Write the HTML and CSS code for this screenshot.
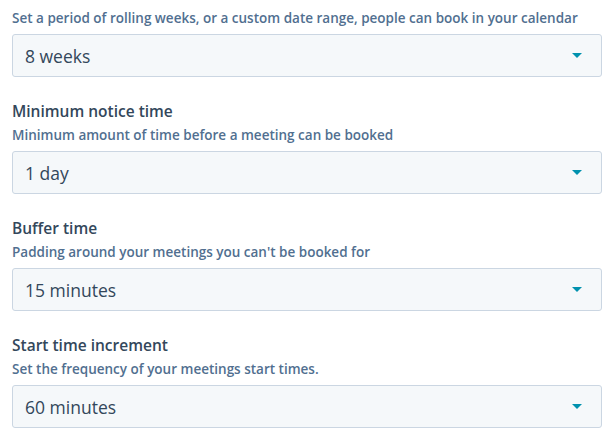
FILE: index.html
```html
<!DOCTYPE html>
<html lang="en">
<head>
    <meta charset="UTF-8">
    <title>Availability settings</title>
    <link rel="stylesheet" href="styles.css">
</head>
<body>
    <div class="field first">
        <p class="help">Set a period of rolling weeks, or a custom date range, people can book in your calendar</p>
        <div class="select">
            <span class="value">8 weeks</span>
            <span class="caret"></span>
        </div>
    </div>

    <div class="field">
        <h3 class="title">Minimum notice time</h3>
        <p class="help">Minimum amount of time before a meeting can be booked</p>
        <div class="select">
            <span class="value">1 day</span>
            <span class="caret"></span>
        </div>
    </div>

    <div class="field">
        <h3 class="title">Buffer time</h3>
        <p class="help">Padding around your meetings you can't be booked for</p>
        <div class="select">
            <span class="value">15 minutes</span>
            <span class="caret"></span>
        </div>
    </div>

    <div class="field">
        <h3 class="title">Start time increment</h3>
        <p class="help">Set the frequency of your meetings start times.</p>
        <div class="select">
            <span class="value">60 minutes</span>
            <span class="caret"></span>
        </div>
    </div>
</body>
</html>
```

FILE: styles.css
```css
body {
    margin: 0;
    padding: 9px 14px 0 12px;
    font-family: "Open Sans", Lato, sans-serif;
    background: #fff;
}
.field {
    margin-bottom: 24px;
}
.title {
    margin: 0 0 5px;
    font-size: 15.5px;
    font-weight: 600;
    color: #33475b;
    line-height: 20px;
}
.help {
    margin: 0 0 7px;
    font-size: 13.5px;
    font-weight: 600;
    color: #516f90;
    line-height: 18px;
}
.select {
    display: flex;
    align-items: center;
    justify-content: space-between;
    height: 41px;
    padding: 0 19px 0 12px;
    background: #f5f8fa;
    border: 1px solid #cbd6e2;
    border-radius: 3px;
}
.value {
    font-size: 17.5px;
    color: #33475b;
}
.caret {
    width: 0;
    height: 0;
    border-left: 5px solid transparent;
    border-right: 5px solid transparent;
    border-top: 5px solid #0091ae;
}
```
